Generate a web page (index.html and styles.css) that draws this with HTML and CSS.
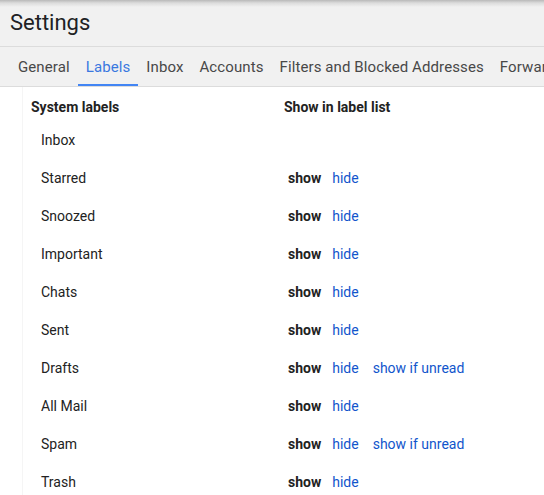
FILE: index.html
```html
<!DOCTYPE html>
<html lang="en">
<head>
<meta charset="utf-8">
<title>Settings</title>
<link rel="stylesheet" href="styles.css">
</head>
<body>
<header class="title-bar"><h1 class="title">Settings</h1></header>
<nav class="tabs">
  <span class="tab">General</span>
  <span class="tab tab-active">Labels</span>
  <span class="tab">Inbox</span>
  <span class="tab">Accounts</span>
  <span class="tab">Filters and Blocked Addresses</span>
  <span class="tab">Forwarding and POP/IMAP</span>
</nav>
<main class="content">
  <div class="grid">
    <div class="head">System labels</div>
    <div class="head">Show in label list</div>

    <div class="name">Inbox</div>
    <div class="opts"></div>

    <div class="name">Starred</div>
    <div class="opts"><b class="cur">show</b><a class="lnk">hide</a></div>

    <div class="name">Snoozed</div>
    <div class="opts"><b class="cur">show</b><a class="lnk">hide</a></div>

    <div class="name">Important</div>
    <div class="opts"><b class="cur">show</b><a class="lnk">hide</a></div>

    <div class="name">Chats</div>
    <div class="opts"><b class="cur">show</b><a class="lnk">hide</a></div>

    <div class="name">Sent</div>
    <div class="opts"><b class="cur">show</b><a class="lnk">hide</a></div>

    <div class="name">Drafts</div>
    <div class="opts"><b class="cur">show</b><a class="lnk">hide</a><a class="lnk">show if unread</a></div>

    <div class="name">All Mail</div>
    <div class="opts"><b class="cur">show</b><a class="lnk">hide</a></div>

    <div class="name">Spam</div>
    <div class="opts"><b class="cur">show</b><a class="lnk">hide</a><a class="lnk">show if unread</a></div>

    <div class="name">Trash</div>
    <div class="opts"><b class="cur">show</b><a class="lnk">hide</a></div>
  </div>
</main>
</body>
</html>
```
FILE: styles.css
```css
* { box-sizing: border-box; }
html, body { margin: 0; padding: 0; }
body {
  font-family: Roboto, "Liberation Sans", Arial, sans-serif;
  color: #222;
  background: #fff;
  width: 544px;
  height: 495px;
  overflow: hidden;
}
.title-bar {
  height: 47px;
  background: linear-gradient(to bottom, #b9b9b9 0, #dcdcdc 3px, #f1f1f1 7px, #f1f1f1 100%);
  border-bottom: 1px solid #dcdcdc;
  padding: 9px 0 0 10px;
}
.title {
  margin: 0;
  font-weight: 400;
  font-size: 22px;
  line-height: 28px;
  color: #202124;
}
.tabs {
  display: flex;
  white-space: nowrap;
  height: 40px;
  background: #f1f1f1;
  border-bottom: 1px solid #dcdcdc;
  padding-left: 10px;
  overflow: hidden;
}
.tab {
  padding: 2px 8px 0;
  font-size: 15px;
  letter-spacing: 0.1px;
  line-height: 36px;
  color: #484848;
  border-bottom: 2px solid transparent;
  flex: none;
}
.tab-active {
  color: #3a78e0;
  border-bottom-color: #4285f4;
}
.content {
  margin-left: 22px;
  border-left: 1px solid #f5f5f5;
  padding-left: 8px;
  min-height: 420px;
}
.grid {
  display: grid;
  grid-template-columns: 253px 1fr;
  font-size: 14px;
}
.head {
  font-weight: 700;
  line-height: 20px;
  padding: 10px 0 4px;
}
.name, .opts {
  line-height: 38px;
  height: 38px;
}
.name { padding-left: 10px; }
.opts { padding-left: 4px; display: flex; }
.cur { font-weight: 700; margin-right: 11px; }
.lnk { color: #15c; margin-right: 14px; cursor: pointer; }
```
